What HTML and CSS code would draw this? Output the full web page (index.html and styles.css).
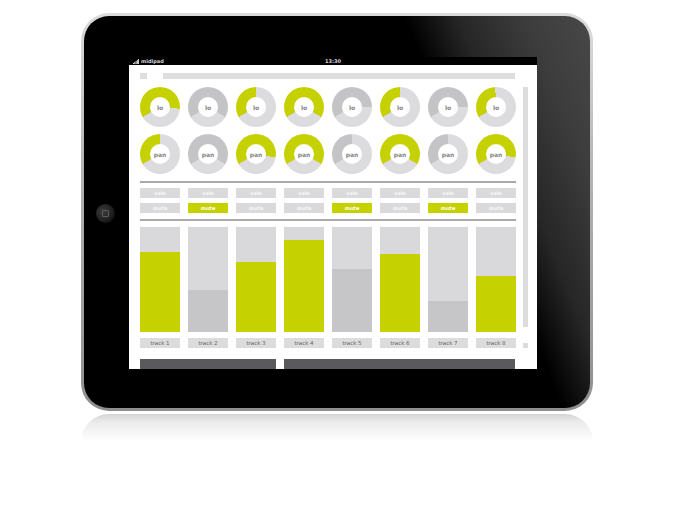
FILE: index.html
```html
<!DOCTYPE html>
<html>
<head>
<meta charset="utf-8">
<link rel="stylesheet" href="styles.css">
</head>
<body>
<div class="page">
  <div class="ipad">
    <div class="bezel">
      <div class="side-left"><div class="home"><span class="home-sq"></span></div></div>
      <div class="display">
        <div class="statusbar">
          <div class="carrier">
            <svg class="signal" width="6" height="5" viewBox="0 0 6 5"><rect x="0" y="4" width="1" height="1" fill="#ddd"/><rect x="1.3" y="3" width="1" height="2" fill="#ddd"/><rect x="2.6" y="2" width="1" height="3" fill="#ddd"/><rect x="3.9" y="1" width="1" height="4" fill="#ddd"/><rect x="5.1" y="0" width="0.9" height="5" fill="#ddd"/></svg>
            <span>midipad</span>
          </div>
          <div class="clock">13:30</div>
          <div></div>
        </div>
        <div class="screen">
          <div class="main">
            <div class="topbar"><span class="tb-sq"></span><span class="tb-long"></span></div>
            <div class="knob-row first">
              <div class="knob on" style="--v:215deg"><span class="cap">lo</span></div>
              <div class="knob off" style="--v:240deg"><span class="cap">lo</span></div>
              <div class="knob on" style="--v:120deg"><span class="cap">lo</span></div>
              <div class="knob on" style="--v:240deg"><span class="cap">lo</span></div>
              <div class="knob off" style="--v:210deg"><span class="cap">lo</span></div>
              <div class="knob on" style="--v:120deg"><span class="cap">lo</span></div>
              <div class="knob off" style="--v:210deg"><span class="cap">lo</span></div>
              <div class="knob on" style="--v:118deg"><span class="cap">lo</span></div>
            </div>
            <div class="knob-row second">
              <div class="knob on" style="--v:120deg"><span class="cap">pan</span></div>
              <div class="knob off" style="--v:240deg"><span class="cap">pan</span></div>
              <div class="knob on" style="--v:220deg"><span class="cap">pan</span></div>
              <div class="knob on" style="--v:240deg"><span class="cap">pan</span></div>
              <div class="knob off" style="--v:120deg"><span class="cap">pan</span></div>
              <div class="knob on" style="--v:240deg"><span class="cap">pan</span></div>
              <div class="knob off" style="--v:120deg"><span class="cap">pan</span></div>
              <div class="knob on" style="--v:220deg"><span class="cap">pan</span></div>
            </div>
            <div class="sep sep-a"></div>
            <div class="btn-row solo">
              <span class="btn">solo</span><span class="btn">solo</span><span class="btn">solo</span><span class="btn">solo</span>
              <span class="btn">solo</span><span class="btn">solo</span><span class="btn">solo</span><span class="btn">solo</span>
            </div>
            <div class="btn-row mute">
              <span class="btn">mute</span><span class="btn active">mute</span><span class="btn">mute</span><span class="btn">mute</span>
              <span class="btn active">mute</span><span class="btn">mute</span><span class="btn active">mute</span><span class="btn">mute</span>
            </div>
            <div class="sep sep-b"></div>
            <div class="fader-row">
              <div class="fader"><span class="fill on" style="height:80px"></span></div>
              <div class="fader"><span class="fill off" style="height:42px"></span></div>
              <div class="fader"><span class="fill on" style="height:70px"></span></div>
              <div class="fader"><span class="fill on" style="height:92px"></span></div>
              <div class="fader"><span class="fill off" style="height:63px"></span></div>
              <div class="fader"><span class="fill on" style="height:78px"></span></div>
              <div class="fader"><span class="fill off" style="height:31px"></span></div>
              <div class="fader"><span class="fill on" style="height:56px"></span></div>
            </div>
            <div class="label-row">
              <span class="label">track 1</span><span class="label">track 2</span><span class="label">track 3</span><span class="label">track 4</span>
              <span class="label">track 5</span><span class="label">track 6</span><span class="label">track 7</span><span class="label">track 8</span>
            </div>
            <div class="bottom-row"><span class="dark dark-a"></span><span class="dark dark-b"></span></div>
          </div>
          <div class="scroll"><span class="track"></span><span class="thumb"></span></div>
        </div>
      </div>
    </div>
  </div>
  <div class="reflection"></div>
</div>
</body>
</html>
```

FILE: styles.css
```css
html, body {
  margin: 0;
  padding: 0;
  background: #ffffff;
}

body {
  font-family: "DejaVu Sans", "Liberation Sans", sans-serif;
}

.page {
  padding: 13px 0 0 81px;
}

.ipad {
  width: 512px;
  height: 398px;
  box-sizing: border-box;
  padding: 3px;
  border-radius: 28px;
  background: linear-gradient(180deg, #dcdcdc 0%, #b4b4b4 40%, #8e8e8e 100%);
}

.bezel {
  width: 506px;
  height: 392px;
  border-radius: 25px;
  background: linear-gradient(68deg, #000 72%, #262626 80%, #3c3c3c 90%, #484848 100%);
  display: flex;
  overflow: hidden;
}

.side-left {
  width: 45px;
  box-sizing: border-box;
  padding-left: 12px;
  display: flex;
  align-items: center;
}

.home {
  width: 19px;
  height: 19px;
  margin-top: 2px;
  border-radius: 50%;
  box-sizing: border-box;
  background: radial-gradient(circle at 38% 40%, #3c3c3c 0%, #262626 45%, #0c0c0c 80%);
  display: flex;
  align-items: center;
  justify-content: center;
}

.home-sq {
  width: 5px;
  height: 5px;
  border: 1px solid #5c5c5c;
  border-radius: 1px;
}

.display {
  width: 408px;
  padding-top: 41px;
  display: flex;
  flex-direction: column;
}

.statusbar {
  height: 8px;
  background: #000;
  display: grid;
  grid-template-columns: 1fr auto 1fr;
  align-items: center;
  font-size: 5px;
  font-weight: bold;
  color: #d8d8d8;
  line-height: 8px;
}

.carrier {
  display: flex;
  align-items: center;
  padding-left: 4px;
  gap: 2px;
}

.clock {
  text-align: center;
}

.screen {
  height: 304px;
  background: #ffffff;
  display: flex;
}

.main {
  width: 376px;
  padding: 8px 0 0 11px;
  display: flex;
  flex-direction: column;
}

.topbar {
  height: 6px;
  display: flex;
}

.tb-sq {
  width: 7px;
  background: #dedede;
}

.tb-long {
  width: 352px;
  margin-left: 16px;
  background: #dedede;
}

.knob-row {
  display: grid;
  grid-template-columns: repeat(8, 40px);
  column-gap: 8px;
  height: 40px;
}

.knob-row.first { margin-top: 8px; }
.knob-row.second { margin-top: 7px; }

.knob {
  width: 40px;
  height: 40px;
  border-radius: 50%;
  display: flex;
  align-items: center;
  justify-content: center;
  background: conic-gradient(from 240deg, var(--arc) 0deg var(--v), #dcdcde var(--v) 360deg);
}

.knob.on { --arc: #c5d100; }
.knob.off { --arc: #c4c4c6; }

.cap {
  width: 20px;
  height: 20px;
  border-radius: 50%;
  background: #ffffff;
  display: flex;
  align-items: center;
  justify-content: center;
  font-size: 6px;
  font-weight: bold;
  color: #858585;
}

.sep {
  height: 2px;
  background: #a9a9a9;
}

.sep-a { margin-top: 7px; }
.sep-b { margin-top: 6px; }

.btn-row {
  display: grid;
  grid-template-columns: repeat(8, 40px);
  column-gap: 8px;
  height: 10px;
}

.btn-row.solo { margin-top: 5px; }
.btn-row.mute { margin-top: 5px; }

.btn {
  background: #dadadc;
  color: #f6f6f6;
  font-size: 5px;
  font-weight: bold;
  display: flex;
  align-items: center;
  justify-content: center;
}

.btn.active {
  background: #c5d100;
  color: #ffffff;
}

.fader-row {
  margin-top: 6px;
  height: 105px;
  display: grid;
  grid-template-columns: repeat(8, 40px);
  column-gap: 8px;
}

.fader {
  background: #d9d9db;
  display: flex;
  flex-direction: column;
  justify-content: flex-end;
}

.fill.on { background: #c5d100; }
.fill.off { background: #c6c6c8; }

.label-row {
  margin-top: 6px;
  height: 10px;
  display: grid;
  grid-template-columns: repeat(8, 40px);
  column-gap: 8px;
}

.label {
  background: #dcdcdc;
  color: #666666;
  font-size: 5.5px;
  display: flex;
  align-items: center;
  justify-content: center;
}

.bottom-row {
  margin-top: 11px;
  height: 10px;
  display: flex;
  gap: 8px;
}

.dark { background: #5a5a5c; }
.dark-a { width: 136px; }
.dark-b { width: 231px; }

.scroll {
  margin-left: 7px;
  padding-top: 22px;
  display: flex;
  flex-direction: column;
}

.track {
  width: 5px;
  height: 240px;
  background: #dcdcdc;
}

.thumb {
  width: 5px;
  height: 5px;
  margin-top: 16px;
  background: #dcdcdc;
}

.reflection {
  width: 512px;
  height: 28px;
  margin-top: 3px;
  border-radius: 28px 28px 0 0;
  background: linear-gradient(180deg, #d4d4d4 0%, #ececec 30%, rgba(255,255,255,0) 100%);
}
```
